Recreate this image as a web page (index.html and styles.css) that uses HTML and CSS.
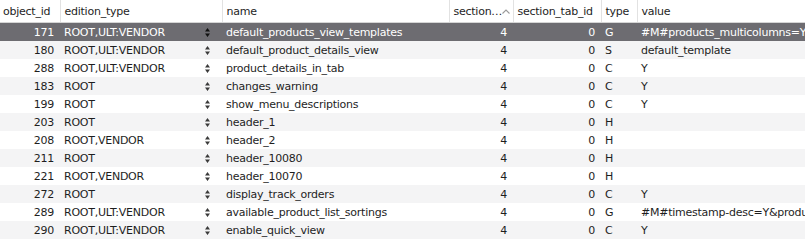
FILE: index.html
```html
<!DOCTYPE html>
<html lang="en">
<head>
    <meta charset="UTF-8">
    <title>settings_objects</title>
    <link rel="stylesheet" href="styles.css">
</head>
<body>
    <table class="grid">
        <colgroup>
            <col class="c-id">
            <col class="c-edition">
            <col class="c-name">
            <col class="c-section">
            <col class="c-tab">
            <col class="c-type">
            <col class="c-value">
        </colgroup>
        <thead>
            <tr>
                <th>object_id</th>
                <th>edition_type</th>
                <th>name</th>
                <th class="sorted">section…<svg class="sort-arrow" width="8" height="5" viewBox="0 0 8 5"><path d="M0.5 4.5 L4 1 L7.5 4.5" fill="none" stroke="#9a9a9a" stroke-width="1.1"/></svg></th>
                <th>section_tab_id</th>
                <th>type</th>
                <th>value</th>
            </tr>
        </thead>
        <tbody id="rows"></tbody>
    </table>

    <script>
        const data = [
            [171, 'ROOT,ULT:VENDOR', 'default_products_view_templates', 4, 0, 'G', '#M#products_multicolumns=Y&products_without_options=Y'],
            [180, 'ROOT,ULT:VENDOR', 'default_product_details_view', 4, 0, 'S', 'default_template'],
            [288, 'ROOT,ULT:VENDOR', 'product_details_in_tab', 4, 0, 'C', 'Y'],
            [183, 'ROOT', 'changes_warning', 4, 0, 'C', 'Y'],
            [199, 'ROOT', 'show_menu_descriptions', 4, 0, 'C', 'Y'],
            [203, 'ROOT', 'header_1', 4, 0, 'H', ''],
            [208, 'ROOT,VENDOR', 'header_2', 4, 0, 'H', ''],
            [211, 'ROOT', 'header_10080', 4, 0, 'H', ''],
            [221, 'ROOT,VENDOR', 'header_10070', 4, 0, 'H', ''],
            [272, 'ROOT', 'display_track_orders', 4, 0, 'C', 'Y'],
            [289, 'ROOT,ULT:VENDOR', 'available_product_list_sortings', 4, 0, 'G', '#M#timestamp-desc=Y&product-asc=Y&price-asc=Y'],
            [290, 'ROOT,ULT:VENDOR', 'enable_quick_view', 4, 0, 'C', 'Y']
        ];

        const stepper = '<svg class="stepper" width="5" height="9" viewBox="0 0 5 9">' +
            '<path d="M2.5 0 L5 3.5 L0 3.5 Z M2.5 9 L5 5.5 L0 5.5 Z"/></svg>';

        const tbody = document.getElementById('rows');

        data.forEach((row, i) => {
            const tr = document.createElement('tr');
            if (i === 0) tr.className = 'selected';
            tr.innerHTML =
                `<td class="num">${row[0]}</td>` +
                `<td class="enum">${row[1]}${stepper}</td>` +
                `<td>${row[2]}</td>` +
                `<td class="num">${row[3]}</td>` +
                `<td class="num">${row[4]}</td>` +
                `<td>${row[5]}</td>` +
                `<td class="clip">${row[6]}</td>`;
            tbody.appendChild(tr);
        });
    </script>
</body>
</html>
```

FILE: styles.css
```css
body {
    margin: 0;
    background-color: #fff;
    font-family: 'DejaVu Sans', Verdana, sans-serif;
    font-size: 11px;
    letter-spacing: -0.25px;
    color: #1e1e1e;
    overflow: hidden;
}

.grid {
    border-collapse: collapse;
    table-layout: fixed;
    width: 805px;
}

.c-id { width: 60px; }
.c-edition { width: 162px; }
.c-name { width: 227px; }
.c-section { width: 64px; }
.c-tab { width: 88px; }
.c-type { width: 36px; }
.c-value { width: 168px; }

.grid th {
    height: 22px;
    padding: 0 4px;
    font-weight: normal;
    text-align: left;
    white-space: nowrap;
    overflow: hidden;
    background-color: #fff;
    border-bottom: 1px solid #d5d5d5;
    border-left: 1px solid #e2e2e2;
    position: relative;
}

.grid th:first-child {
    border-left: none;
    padding-left: 3px;
}

.sort-arrow {
    position: absolute;
    right: 3px;
    top: 9px;
}

.grid td {
    height: 18px;
    padding: 0 4px;
    white-space: nowrap;
    overflow: hidden;
}

.grid tbody tr:nth-child(even) {
    background-color: #f4f4f5;
}

.grid tbody tr.selected {
    background-color: #6d6c71;
    color: #fff;
}

.num {
    text-align: right;
    padding-right: 6px !important;
}

.enum {
    position: relative;
}

.stepper {
    position: absolute;
    left: 145px;
    top: 5px;
    fill: #3a3a3a;
}

.selected .stepper {
    fill: #111;
}

.clip {
    text-overflow: clip;
}
```
